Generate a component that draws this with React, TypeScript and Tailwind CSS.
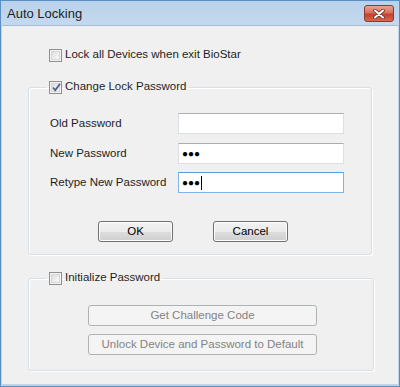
import React from "react";

const font = { fontFamily: '"Segoe UI", "Liberation Sans", Arial, sans-serif' };

function Check({ checked }: { checked?: boolean }) {
  return (
    <span className="relative inline-block w-[13px] h-[13px] border border-[#8f8f8f] bg-[#f4f4f4] shrink-0">
      <span className="absolute inset-[1px] border border-[#d7d7d7] bg-gradient-to-br from-[#dcdcdc] to-[#fbfbfb]" />
      {checked && (
        <svg className="absolute left-[1px] top-[0px]" width="11" height="11" viewBox="0 0 11 11">
          <path d="M2 5.5 L4.3 8.3 L9 1.8" fill="none" stroke="#4a5f97" strokeWidth="1.8" />
        </svg>
      )}
    </span>
  );
}

function Btn({ children, w, disabled, ml }: { children: React.ReactNode; w: string; disabled?: boolean; ml?: string }) {
  return (
    <div
      className={`${w} ${ml ?? ""} h-[21px] rounded-[3px] border flex items-center justify-center text-[11.5px] whitespace-nowrap ${
        disabled
          ? "border-[#adb2b5] bg-[#f4f4f4] text-[#838383]"
          : "border-[#707070] bg-[linear-gradient(#f2f2f2_0%,#ebebeb_50%,#dddddd_50%,#cfcfcf_100%)] text-black shadow-[inset_0_0_0_1px_#fcfcfc]"
      }`}
    >
      {children}
    </div>
  );
}

function Field({ label, value, focused, mt }: { label: string; value: string; focused?: boolean; mt: string }) {
  return (
    <div className={`flex items-center ${mt}`}>
      <span className="w-[149px] shrink-0 whitespace-nowrap pl-[21px] text-[11.5px] text-[#1e1e1e]">{label}</span>
      <div
        className={`w-[166px] h-[21px] shrink-0 bg-white border flex items-center pl-[3px] ${
          focused ? "border-[#7eb4ea] border-t-[#569de5]" : "border-[#dbdfe6] border-t-[#abadb3]"
        }`}
      >
        <span className="text-[10px] leading-none text-black">{value}</span>
        {focused && <span className="w-[1px] h-[14px] bg-black ml-[1px]" />}
      </div>
    </div>
  );
}

export default function App() {
  return (
    <div className="w-[400px] h-[387px] flex flex-col bg-[#bcd3ea] border border-[#5a8fc4]" style={font}>
      <div className="h-[24px] flex items-start justify-between bg-gradient-to-b from-[#b9d1ea] to-[#c4d9ee] pl-[6px] pr-[5px]">
        <span className="text-[13px] text-[#1e1e1e] mt-[5px] leading-[16px]">Auto Locking</span>
        <div className="mt-[4px] w-[30px] h-[17px] rounded-[3px] border border-[#8a3a31] bg-[linear-gradient(#e8a493_0%,#d7715c_45%,#c4412a_55%,#d6684f_100%)] flex items-center justify-center">
          <svg width="12" height="10" viewBox="0 0 12 10">
            <path d="M2 1.5 L10 8.5 M10 1.5 L2 8.5" stroke="#4a2a26" strokeWidth="3.4" strokeLinecap="round" />
            <path d="M2 1.5 L10 8.5 M10 1.5 L2 8.5" stroke="#ffffff" strokeWidth="2" strokeLinecap="round" />
          </svg>
        </div>
      </div>
      <div className="flex-1 mx-[1px] mb-[2px] bg-[#f0f0f0] border-t border-[#a8bdd3] flex flex-col pl-[26px]">
        <label className="flex items-center mt-[22px] ml-[21px] h-[14px]">
          <Check />
          <span className="ml-[3px] text-[11.5px] text-[#1e1e1e]">Lock all Devices when exit BioStar</span>
        </label>
        <fieldset className="mt-[18px] w-[344px] h-[175px] border border-[#d5dfe5] rounded-[3px] shadow-[inset_1px_1px_0_#ffffff,1px_1px_0_#ffffff] px-0 pb-0">
          <legend className="ml-[17px] px-[3px] flex items-center h-[14px]">
            <Check checked />
            <span className="ml-[3px] text-[11.5px] text-[#1e1e1e]">Change Lock Password</span>
          </legend>
          <Field label="Old Password" value="" mt="mt-[19px]" />
          <Field label="New Password" value="●●●" mt="mt-[9px]" />
          <Field label="Retype New Password" value="●●●" focused mt="mt-[8px]" />
          <div className="flex mt-[28px]">
            <Btn w="w-[75px]" ml="ml-[69px]">OK</Btn>
            <Btn w="w-[75px]" ml="ml-[40px]">Cancel</Btn>
          </div>
        </fieldset>
        <fieldset className="mt-[16px] w-[346px] h-[100px] border border-[#d5dfe5] rounded-[3px] shadow-[inset_1px_1px_0_#ffffff,1px_1px_0_#ffffff] px-0 pb-0">
          <legend className="ml-[17px] px-[3px] flex items-center h-[14px]">
            <Check />
            <span className="ml-[3px] text-[11.5px] text-[#1e1e1e]">Initialize Password</span>
          </legend>
          <div className="flex flex-col mt-[20px] ml-[59px] gap-[8px]">
            <Btn w="w-[229px]" disabled>Get Challenge Code</Btn>
            <Btn w="w-[229px]" disabled>Unlock Device and Password to Default</Btn>
          </div>
        </fieldset>
      </div>
    </div>
  );
}
